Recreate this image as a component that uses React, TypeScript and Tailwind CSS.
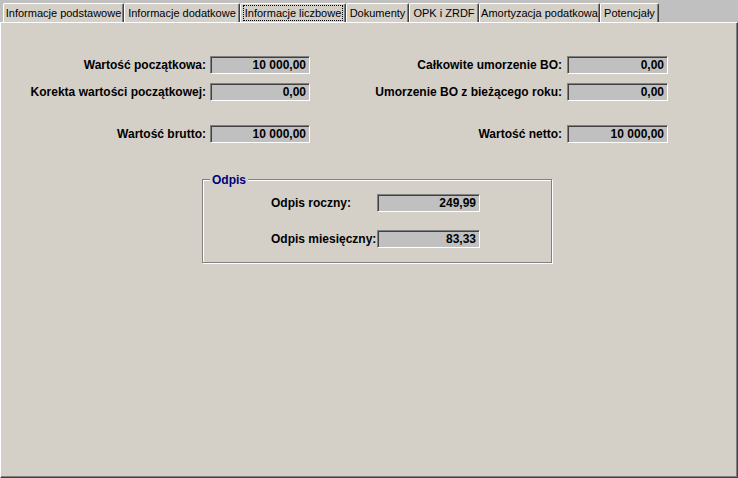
import React from 'react';

const tabs = [
  { label: 'Informacje podstawowe', width: 'w-[121px]' },
  { label: 'Informacje dodatkowe', width: 'w-[116px]' },
  { label: 'Informacje liczbowe', width: 'w-[106px]', active: true },
  { label: 'Dokumenty', width: 'w-[63px]' },
  { label: 'OPK i ZRDF', width: 'w-[70px]' },
  { label: 'Amortyzacja podatkowa', width: 'w-[121px]' },
  { label: 'Potencjały', width: 'w-[59px]' },
];

const bold = 'font-bold text-[12px]';

const Field = ({ value, width = 'w-[100px]' }: { value: string; width?: string }) => (
  <div
    className={`flex h-[18px] ${width} items-center justify-end border border-[#808080] border-b-white border-r-white bg-[#c0c0c0] pr-[3px] text-black shadow-[inset_1px_1px_0_#404040] ${bold}`}
  >
    {value}
  </div>
);

const Row = ({
  left,
  leftValue,
  right,
  rightValue,
  className = '',
}: {
  left: string;
  leftValue: string;
  right: string;
  rightValue: string;
  className?: string;
}) => (
  <div className={`flex h-[18px] items-center ${className}`}>
    <span className={`w-[205px] whitespace-nowrap text-right ${bold}`}>{left}</span>
    <div className="ml-[4px]">
      <Field value={leftValue} />
    </div>
    <span className={`w-[252px] whitespace-nowrap text-right ${bold}`}>{right}</span>
    <div className="ml-[5px]">
      <Field value={rightValue} width="w-[101px]" />
    </div>
  </div>
);

export default function App() {
  return (
    <div className="flex h-[478px] w-[738px] flex-col overflow-hidden bg-[#c0c0c0] font-['Liberation_Sans',sans-serif] text-[11px] text-black">
      <div className="flex h-[22px] items-end pl-[3px]">
        {tabs.map((tab) => (
          <div
            key={tab.label}
            className={`flex h-[19px] ${tab.width} shrink-0 items-center justify-center rounded-t-[2px] border-l border-t border-r border-white border-r-[#404040] bg-[#d4d0c8] shadow-[inset_-1px_0_0_#808080]`}
          >
            {tab.active ? (
              <span className="border border-dotted border-black px-[1px] leading-[14px]">{tab.label}</span>
            ) : (
              <span className="leading-[14px]">{tab.label}</span>
            )}
          </div>
        ))}
      </div>
      <div className="flex flex-1 flex-col border border-white border-b-[#404040] border-r-[#404040] bg-[#d4d0c8] shadow-[inset_-1px_-1px_0_#808080]">
        <Row
          className="mt-[33px]"
          left="Wartość początkowa:"
          leftValue="10 000,00"
          right="Całkowite umorzenie BO:"
          rightValue="0,00"
        />
        <Row
          className="mt-[9px]"
          left="Korekta wartości początkowej:"
          leftValue="0,00"
          right="Umorzenie BO z bieżącego roku:"
          rightValue="0,00"
        />
        <Row
          className="mt-[24px]"
          left="Wartość brutto:"
          leftValue="10 000,00"
          right="Wartość netto:"
          rightValue="10 000,00"
        />
        <div className="relative ml-[201px] mt-[36px] h-[84px] w-[350px] border border-[#808080] shadow-[inset_1px_1px_0_#fff,1px_1px_0_#fff]">
          <span className={`absolute left-[7px] top-[-9px] bg-[#d4d0c8] px-[2px] text-[#000080] ${bold}`}>
            Odpis
          </span>
          <div className="flex flex-col pl-[68px] pt-[14px]">
            <div className="flex items-center">
              <span className={`w-[106px] whitespace-nowrap ${bold}`}>Odpis roczny:</span>
              <Field value="249,99" width="w-[103px]" />
            </div>
            <div className="mt-[18px] flex items-center">
              <span className={`w-[106px] whitespace-nowrap ${bold}`}>Odpis miesięczny:</span>
              <Field value="83,33" width="w-[103px]" />
            </div>
          </div>
        </div>
      </div>
    </div>
  );
}
